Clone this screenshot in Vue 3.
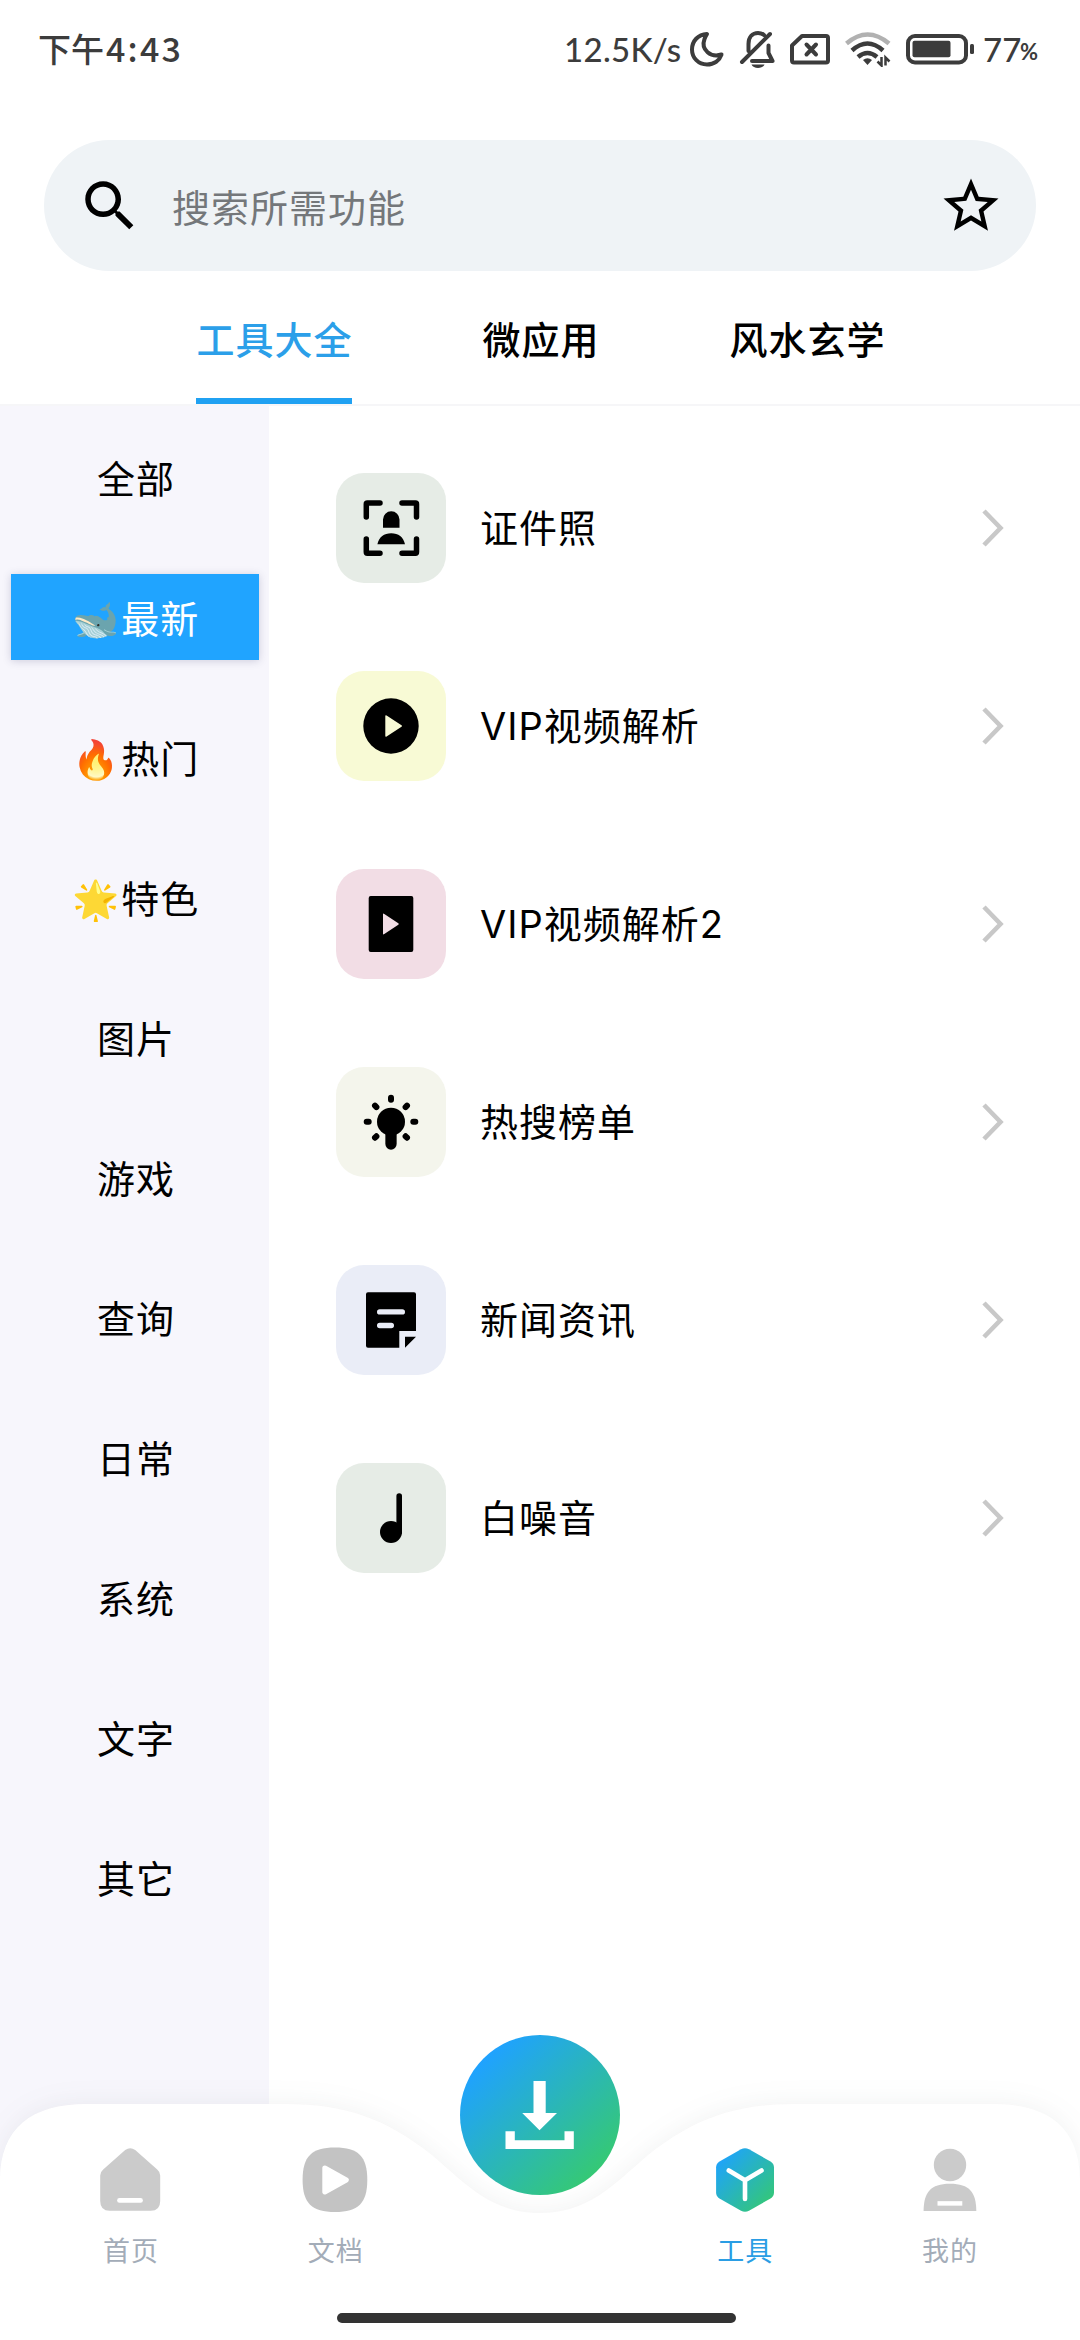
<script setup>
import { ref } from 'vue'

const tabs = ['工具大全', '微应用', '风水玄学']
const activeTab = ref(0)

const categories = [
  { name: '全部' },
  { name: '最新', emoji: '🐋' },
  { name: '热门', emoji: '🔥' },
  { name: '特色', emoji: '🌟' },
  { name: '图片' },
  { name: '游戏' },
  { name: '查询' },
  { name: '日常' },
  { name: '系统' },
  { name: '文字' },
  { name: '其它' },
]
const activeCategory = ref(1)

const tools = [
  { name: '证件照', tone: 'sage', icon: 'portrait' },
  { name: 'VIP视频解析', tone: 'lemon', icon: 'play' },
  { name: 'VIP视频解析2', tone: 'rose', icon: 'film' },
  { name: '热搜榜单', tone: 'ivory', icon: 'bulb' },
  { name: '新闻资讯', tone: 'sky', icon: 'note' },
  { name: '白噪音', tone: 'sage', icon: 'music' },
]
</script>

<template>
  <div class="screen">
    <header class="status">
      <span class="time">下午<span class="digits">4:43</span></span>
      <div class="status-right">
        <span class="speed">12.5K/s</span>
        <svg class="moon" width="36" height="38" viewBox="688 29 36 38" fill="none" stroke="#3c3c3c" stroke-width="4" stroke-linejoin="round">
          <path d="M706 33C697 33.500 691 40 691 48.500C691 57 697.500 63.500 706 63.500C713 63.500 718.500 59.500 720.500 53.500C710 57 699.500 49 703.500 38C704.200 36 705 34.300 706 33Z" />
        </svg>
        <svg class="bell" width="38" height="40" viewBox="738 28 38 40" fill="none" stroke="#3c3c3c" stroke-width="4" stroke-linecap="round" stroke-linejoin="round">
          <path d="M741 61L769 33M747.500 50V43C747.500 36 751.500 32 757 32C759.500 32 761.500 32.700 763 34M767.500 44.500V52L771.500 60H751" />
          <path d="M750.500 63.500H763.500C762 68 752 68 750.500 63.500Z" fill="#3c3c3c" stroke="none" />
        </svg>
        <svg class="sim" width="42" height="34" viewBox="788 32 42 34" fill="none" stroke="#3c3c3c" stroke-width="4" stroke-linejoin="round">
          <path d="M801 36H825Q827 36 827 38V60.500Q827 62.500 825 62.500H793Q791 62.500 791 60.500V45.500Z" />
          <path d="M805.500 44.500L815 54.500M815 44.500L805.500 54.500" stroke-linecap="round" />
        </svg>
        <svg class="wifi" width="48" height="36" viewBox="843 31 48 36" fill="none" stroke="#3c3c3c" stroke-width="4.500">
          <path d="M845.500 43.500Q866.500 25.500 888 43.500" stroke="#b1b1b1" />
          <path d="M851 50.500Q866.500 36.500 882 50.500" />
          <path d="M857 57Q866.500 49 876 57" />
          <path d="M862 60Q866.500 56.500 871 60L866.500 65Z" fill="#3c3c3c" stroke="none" />
          <path d="M880.500 57V65.500L876.500 61.500M884.500 65.500V57.500L888.500 61.500" stroke-width="2.500" />
        </svg>
        <svg class="battery" width="70" height="32" viewBox="904 32 70 32">
          <rect x="907" y="35" width="58" height="26.500" rx="7" fill="none" stroke="#3c3c3c" stroke-width="4" />
          <rect x="911.500" y="39.800" width="38" height="16.500" rx="2" fill="#3c3c3c" />
          <rect x="969" y="43" width="4" height="10" rx="1.500" fill="#3c3c3c" />
        </svg>
        <span class="level">77</span><span class="percent">%</span>
      </div>
    </header>

    <div class="search">
      <svg width="66" height="66" viewBox="0 0 24 24">
        <path d="M15.500 14h-.79l-.28-.27C15.410 12.590 16 11.110 16 9.500 16 5.910 13.090 3 9.500 3S3 5.910 3 9.500 5.910 16 9.500 16c1.610 0 3.090-.59 4.230-1.570l.27.28v.79l5 4.990L20.490 19l-4.990-5zm-6 0C7.010 14 5 11.990 5 9.500S7.010 5 9.500 5 14 7.010 14 9.500 11.990 14 9.500 14z" />
      </svg>
      <span class="placeholder">搜索所需功能</span>
      <svg width="66" height="66" viewBox="0 0 24 24">
        <path d="M22 9.240l-7.190-.62L12 2 9.190 8.630 2 9.240l5.460 4.730L5.820 21 12 17.270 18.180 21l-1.630-7.030L22 9.240zM12 15.400l-3.760 2.270 1-4.280-3.320-2.880 4.380-.38L12 6.100l1.710 4.040 4.380.38-3.320 2.880 1 4.280L12 15.400z" />
      </svg>
    </div>

    <nav class="tabs">
      <a v-for="(tab, i) in tabs" :key="tab" class="tab" :class="{ active: i === activeTab }" @click="activeTab = i">{{ tab }}</a>
    </nav>

    <main class="content">
      <aside class="sidebar">
        <a
          v-for="(item, i) in categories"
          :key="item.name"
          class="category"
          :class="{ active: i === activeCategory }"
          @click="activeCategory = i"
        ><span v-if="item.emoji" class="emoji">{{ item.emoji }}</span>{{ item.name }}</a>
      </aside>

      <section class="tools">
        <div v-for="tool in tools" :key="tool.name" class="tool">
          <div class="tile" :class="tool.tone">
            <svg width="110" height="110" viewBox="0 0 110 110">
              <g v-if="tool.icon === 'portrait'">
                <path d="M30.300 44V31Q30.300 30 31.300 30H44M66 30H79.500Q80.500 30 80.500 31V44M80.500 66V79Q80.500 80.200 79.500 80.200H66M44 80.200H31.300Q30.300 80.200 30.300 79V66" fill="none" stroke="#000" stroke-width="5.500" stroke-linecap="round" />
                <path d="M47 54.700V46.500a8.250 8.250 0 0 1 16.500 0V54.700ZM41.400 71.300C43 64 48 60.300 55.200 60.300S67.500 64 69 71.300Z" />
              </g>
              <path v-else-if="tool.icon === 'play'" fill-rule="evenodd" d="M55 27.300a27.700 27.700 0 1 0 0 55.400a27.700 27.700 0 1 0 0-55.400ZM49.300 45.200Q49.300 43.700 50.600 44.500L65.500 54.200Q66.700 55 65.500 55.800L50.600 65.500Q49.300 66.300 49.300 64.800Z" />
              <path v-else-if="tool.icon === 'film'" fill-rule="evenodd" d="M34.700 27H75.300Q77.300 27 77.300 29V81Q77.300 83 75.300 83H34.700Q32.700 83 32.700 81V29Q32.700 27 34.700 27ZM47 45.500Q47 44 48.300 44.900L62.300 54.200Q63.400 55 62.300 55.800L48.300 65.100Q47 66 47 64.500Z" />
              <g v-else-if="tool.icon === 'bulb'">
                <circle cx="55" cy="54.700" r="14" />
                <path d="M55 56V77" stroke="#000" stroke-width="11.300" stroke-linecap="round" />
                <path d="M55 30.700V32.700M30.700 54.700H32.700M77.300 54.700H79.300M39 38.700L40.400 40.100M71 38.700L69.600 40.100M39 70.700L40.400 69.300M71 70.700L69.600 69.300" stroke="#000" stroke-width="6" stroke-linecap="round" />
              </g>
              <path v-else-if="tool.icon === 'note'" fill-rule="evenodd" d="M32 27.200H78Q80 27.200 80 29.200V66H63.300V82.700H32Q30 82.700 30 80.700V29.200Q30 27.200 32 27.200ZM43.700 44.200a2.700 2.700 0 0 0 0 5.400H66.300a2.700 2.700 0 0 0 0-5.400ZM43.700 57.800a2.700 2.700 0 0 0 0 5.400H55.300a2.700 2.700 0 0 0 0-5.400ZM69 71.700H80L69 82.700Z" />
              <g v-else>
                <circle cx="55" cy="69" r="11" />
                <path d="M63.200 33V69" stroke="#000" stroke-width="5.600" stroke-linecap="round" />
              </g>
            </svg>
          </div>
          <span class="tool-name">{{ tool.name }}</span>
          <svg class="chevron" width="24" height="40" viewBox="0 0 24 40">
            <path d="M3 3L19.500 20L3 37" fill="none" stroke="#c8c8c8" stroke-width="4.600" />
          </svg>
        </div>
      </section>
    </main>

    <footer class="dock">
      <svg class="dock-shape" width="1080" height="300" viewBox="0 0 1080 300">
        <path d="M0 140C0 88 32 64 86 64H285C345 64 385 78 432 115C468 146 492 173 540 173C588 173 612 146 648 115C695 78 735 64 795 64H994C1048 64 1080 88 1080 140V300H0Z" fill="#fff" />
      </svg>
      <div class="dock-items">
        <a class="dock-item">
          <svg width="66" height="66" viewBox="97.300 2147.500 66 66">
            <path d="M125.500 2150.500Q130.500 2147 135.500 2150.500L157.500 2170Q160.500 2172.500 160.500 2176V2201.500Q160.500 2211.300 151 2211.300H110Q100.500 2211.300 100.500 2201.500V2176Q100.500 2172.500 103.500 2170Z" fill="#cbcbcb" />
            <path d="M119.800 2200.900H140.800" stroke="#fff" stroke-width="4.800" stroke-linecap="round" />
          </svg>
          <span>首页</span>
        </a>
        <a class="dock-item">
          <svg width="66" height="66" viewBox="301.700 2147.500 66 66">
            <path d="M334.700 2148C358 2148 367 2157 367 2180.300S358 2212.600 334.700 2212.600S302.300 2203.600 302.300 2180.300S311.300 2148 334.700 2148Z" fill="#c3c3c3" />
            <path d="M324.500 2168.500L346 2180.500L324.500 2192.500Z" fill="#fff" stroke="#fff" stroke-width="5" stroke-linejoin="round" />
          </svg>
          <span>文档</span>
        </a>
        <a class="dock-item">
          <span class="fab">
            <svg width="160" height="160" viewBox="459.500 2034.700 160 160" fill="#fff">
              <path d="M533 2080.700H545.200V2112.700H556.500L539 2130L521.700 2112.700H533ZM505 2131H514.300V2140H564V2131H573.300V2148.700H505Z" />
            </svg>
          </span>
        </a>
        <a class="dock-item active">
          <svg width="66" height="66" viewBox="711.500 2147.500 66 66">
            <defs>
              <linearGradient id="hex" x1="0" y1="0" x2="1" y2="1">
                <stop offset=".15" stop-color="#1fa5f5" />
                <stop offset=".9" stop-color="#34c777" />
              </linearGradient>
            </defs>
            <path d="M740.500 2149.700Q744.500 2147.700 748.500 2149.700L770 2162Q773.500 2164.200 773.500 2168V2193Q773.500 2196.800 770 2199L748.500 2211.300Q744.500 2213.300 740.500 2211.300L719 2199Q715.600 2196.800 715.600 2193V2168Q715.600 2164.200 719 2162Z" fill="url(#hex)" />
            <path d="M728.300 2171L744.500 2180.700L761 2171M744.500 2180.700V2199.500" fill="none" stroke="#fff" stroke-width="4.600" stroke-linecap="round" stroke-linejoin="round" />
          </svg>
          <span>工具</span>
        </a>
        <a class="dock-item">
          <svg width="66" height="66" viewBox="916.700 2147.500 66 66">
            <circle cx="949.700" cy="2165.500" r="16.200" fill="#cbcbcb" />
            <path d="M923.300 2211.400C923.500 2193 930 2184.300 949.700 2184.300S975.800 2193 976 2211.400Z" fill="#cbcbcb" />
            <path d="M937.200 2203.900H962" stroke="#fff" stroke-width="4.500" />
          </svg>
          <span>我的</span>
        </a>
      </div>
      <div class="home-bar"></div>
    </footer>
  </div>
</template>

<style>
body {
  background: #fff;
}
</style>

<style scoped>
.screen {
  position: relative;
  display: flex;
  flex-direction: column;
  width: 1080px;
  height: 2340px;
  overflow: hidden;
  background: #fff;
  color: #000;
  font-family: "Noto Sans CJK SC", "Noto Color Emoji", sans-serif;
  font-size: 38px;
  letter-spacing: 1px;
}
svg {
  display: block;
  flex: none;
}
.status {
  display: flex;
  justify-content: space-between;
  height: 97px;
  padding: 0 42px 0 38px;
  color: #3c3c3c;
  font-size: 33px;
  font-weight: 500;
  line-height: 96px;
  letter-spacing: 0;
}
.time {
  display: flex;
}
.digits {
  padding-left: 2px;
  font-size: 34px;
  letter-spacing: 2.2px;
}
.status-right {
  display: flex;
  align-items: center;
  white-space: nowrap;
}
.speed {
  width: 125px;
  font-family: Lato, sans-serif;
  font-size: 33px;
  letter-spacing: 0.3px;
}
.moon { margin-right: 14px; }
.bell { margin-right: 12px; }
.sim { margin-right: 13px; }
.wifi { margin-right: 13px; }
.battery { margin-right: 8px; }
.level,
.percent {
  font-family: Lato, sans-serif;
}
.level {
  width: 37px;
  font-size: 33px;
}
.percent {
  width: 18px;
  padding-top: 6px;
  font-size: 22px;
  font-weight: 700;
}
.search {
  display: flex;
  align-items: center;
  height: 131px;
  margin: 43px 44px 0 44px;
  padding: 0 32px 0 33px;
  border-radius: 66px;
  background: #eff3f6;
}
.placeholder {
  flex: 1;
  padding-left: 29px;
  color: #74777a;
  line-height: 56px;
}
.tabs {
  display: flex;
  justify-content: center;
  gap: 130px;
  height: 133px;
  padding-left: 2px;
  border-bottom: 2px solid #f6f6f8;
}
.tab {
  height: 127px;
  border-bottom: 6px solid transparent;
  font-weight: 500;
  line-height: 133px;
}
.tab.active {
  border-color: #20a1f2;
  color: #2b9fe9;
}
.content {
  display: flex;
  flex: 1;
}
.sidebar {
  display: flex;
  flex-direction: column;
  gap: 54px;
  width: 269px;
  box-sizing: border-box;
  padding: 28px 10px 0 11px;
  background: #f7f6fc;
}
.category {
  display: flex;
  align-items: center;
  justify-content: center;
  height: 86px;
  padding-left: 2px;
  line-height: 84px;
}
.category.active {
  background: #20a4ff;
  box-shadow: 0 1px 8px rgba(60, 60, 110, 0.22);
  color: #fff;
}
.emoji {
  font-size: 38px;
}
.tools {
  display: flex;
  flex: 1;
  flex-direction: column;
  gap: 88px;
  padding: 67px 75px 0 67px;
}
.tool {
  display: flex;
  align-items: center;
  height: 110px;
}
.tile {
  width: 110px;
  height: 110px;
  border-radius: 28px;
}
.sage { background: #e6ece6; }
.lemon { background: #f8fad5; }
.rose { background: #f2dde5; }
.ivory { background: #f4f5ec; }
.sky { background: #eaedf7; }
.tool-name {
  flex: 1;
  padding-left: 34px;
  font-family: Inter, "Noto Sans CJK SC", sans-serif;
  line-height: 56px;
}
.dock {
  position: absolute;
  bottom: 0;
  left: 0;
  width: 1080px;
  height: 300px;
}
.dock-shape {
  position: absolute;
  inset: 0;
  overflow: visible;
  filter: drop-shadow(0 -2px 12px rgba(70, 80, 90, 0.07));
}
.dock-items {
  position: relative;
  display: flex;
  height: 273px;
  padding: 0 28px;
}
.dock-item {
  display: flex;
  flex: 1;
  flex-direction: column;
  align-items: center;
  padding-top: 107px;
  color: #a3acb8;
  font-size: 27px;
  line-height: 40px;
}
.dock-item > svg + span {
  margin-top: 17px;
  padding-left: 1px;
}
.dock-item.active {
  color: #2a9de4;
}
.fab {
  width: 160px;
  height: 160px;
  margin-top: -112px;
  border-radius: 50%;
  background: linear-gradient(135deg, #1fa2ff 15%, #36ca70 88%);
}
.home-bar {
  position: relative;
  width: 399px;
  height: 10px;
  margin-left: 337px;
  border-radius: 5px;
  background: #333;
}
</style>
